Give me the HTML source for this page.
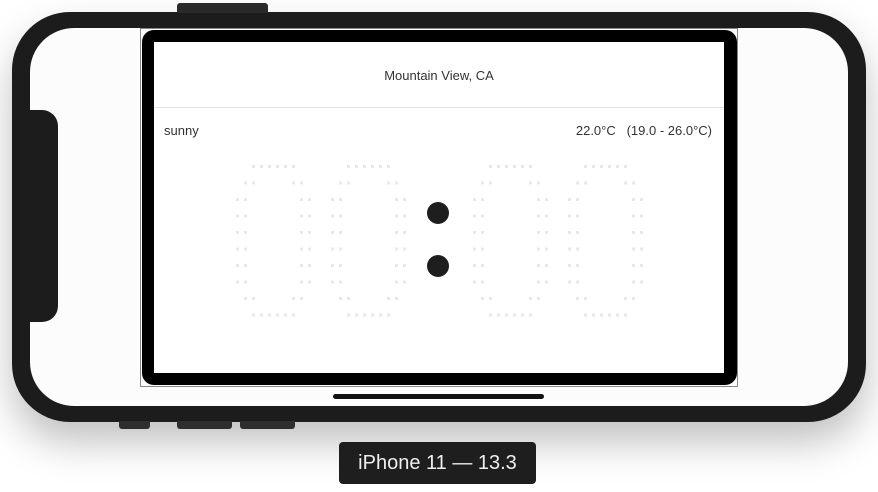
<!DOCTYPE html>
<html><head><meta charset="utf-8"><style>
body{margin:0;width:878px;height:492px;background:#fff;position:relative;overflow:hidden;font-family:"Liberation Sans",sans-serif}
.a{position:absolute}
</style></head><body>
<div class="a" style="left:12px;top:12px;width:854px;height:410px;border-radius:58px;background:#1c1c1c;box-shadow:0 20px 40px rgba(0,0,0,0.25)"></div>
<div class="a" style="left:177px;top:3px;width:91px;height:10px;background:#2a2a2a;border-radius:3px 3px 0 0"></div>
<div class="a" style="left:119px;top:421px;width:31px;height:8px;background:#2e2e2e;border-radius:0 0 3px 3px"></div>
<div class="a" style="left:177px;top:421px;width:55px;height:8px;background:#2e2e2e;border-radius:0 0 3px 3px"></div>
<div class="a" style="left:240px;top:421px;width:55px;height:8px;background:#2e2e2e;border-radius:0 0 3px 3px"></div>
<div class="a" style="left:30px;top:28px;width:818px;height:378px;border-radius:44px;background:#fcfcfc"></div>
<div class="a" style="left:28px;top:110px;width:30px;height:212px;background:#1c1c1c;border-radius:0 16px 16px 0"></div>
<div class="a" style="left:140px;top:28px;width:598px;height:359px;border:1px solid #888;box-sizing:border-box"></div>
<div class="a" style="left:142px;top:30px;width:595px;height:355px;background:#000;border-radius:12px"></div>
<div class="a" style="left:154px;top:42px;width:570px;height:331px;background:#fff"></div>
<div class="a" style="left:154px;top:107px;width:570px;height:1px;background:#e2e2e2"></div>
<div class="a" style="left:154px;top:68px;width:570px;text-align:center;font-size:13px;color:#333">Mountain View, CA</div>
<div class="a" style="left:164px;top:123px;font-size:13px;color:#333">sunny</div>
<div class="a" style="right:166px;top:123px;font-size:13px;color:#333;white-space:pre">22.0°C   (19.0 - 26.0°C)</div>
<svg class="a" style="left:0;top:0" width="878" height="492">
<defs><g id="d" fill="#e8e8e8">
<g id="r0"><rect x="16" width="3" height="3"/><rect x="24" width="3" height="3"/><rect x="32" width="3" height="3"/><rect x="40" width="3" height="3"/><rect x="48" width="3" height="3"/><rect x="56" width="3" height="3"/></g>
<g id="r1" transform="translate(0,16.5)"><rect x="8" width="3" height="3"/><rect x="16" width="3" height="3"/><rect x="56" width="3" height="3"/><rect x="64" width="3" height="3"/></g>
<g id="r2" transform="translate(0,33)"><rect x="0" width="3" height="3"/><rect x="8" width="3" height="3"/><rect x="64" width="3" height="3"/><rect x="72" width="3" height="3"/></g>
<use href="#r2" y="16.5"/><use href="#r2" y="33"/><use href="#r2" y="49.5"/><use href="#r2" y="66"/><use href="#r2" y="82.5"/>
<use href="#r1" y="115.5"/><use href="#r0" y="148.5"/>
</g></defs>
<use href="#d" x="236" y="165"/><use href="#d" x="331" y="165"/><use href="#d" x="473" y="165"/><use href="#d" x="568" y="165"/>
<circle cx="438" cy="213" r="11" fill="#1e1e1e"/><circle cx="438" cy="266" r="11" fill="#1e1e1e"/>
</svg>
<div class="a" style="left:333px;top:394px;width:211px;height:5px;border-radius:3px;background:#111"></div>
<div class="a" style="left:339px;top:442px;width:197px;height:42px;background:#1e1e1e;border-radius:4px;color:#eee;font-size:20px;line-height:42px;text-align:center">iPhone 11 — 13.3</div>
</body></html>
